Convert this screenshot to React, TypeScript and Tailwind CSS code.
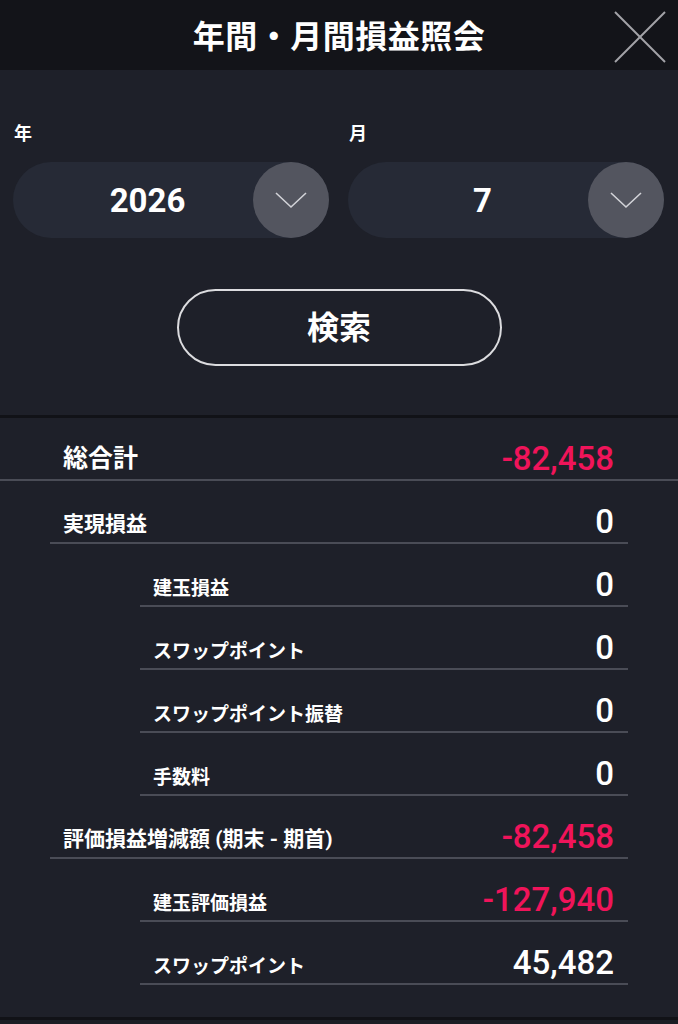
import React from 'react'

type Row = {
  label: string
  value: string
  level: 1 | 2
  negative?: boolean
}

const rows: Row[] = [
  { label: '実現損益', value: '0', level: 1 },
  { label: '建玉損益', value: '0', level: 2 },
  { label: 'スワップポイント', value: '0', level: 2 },
  { label: 'スワップポイント振替', value: '0', level: 2 },
  { label: '手数料', value: '0', level: 2 },
  { label: '評価損益増減額 (期末 - 期首)', value: '-82,458', level: 1, negative: true },
  { label: '建玉評価損益', value: '-127,940', level: 2, negative: true },
  { label: 'スワップポイント', value: '45,482', level: 2 },
]

const Chevron = () => (
  <svg width="34" height="18" viewBox="0 0 34 18" fill="none">
    <polyline points="2,2 17,16 32,2" stroke="#d2d3d8" strokeWidth="1.6" />
  </svg>
)

const Select = ({ label, value }: { label: string; value: string }) => (
  <div className="flex-1 flex flex-col">
    <span className="text-[18px] font-bold leading-[26px] pl-[1px] text-white">{label}</span>
    <div className="relative mt-[15px] h-[76px] rounded-full bg-[#262a36] flex items-center justify-center pr-[47px]">
      <span className="text-[33px] font-bold text-white leading-none">{value}</span>
      <div className="absolute right-0 top-0 w-[76px] h-[76px] rounded-full bg-[#53555f] flex items-center justify-center">
        <Chevron />
      </div>
    </div>
  </div>
)

export default function App() {
  return (
    <div
      className="w-full min-h-[1024px] bg-[#1b1d24] text-white"
      style={{ fontFamily: "Roboto, 'Noto Sans CJK JP', sans-serif" }}
    >
      {/* Header */}
      <header className="relative h-[70px] bg-[#131419] flex items-center justify-center">
        <h1 className="text-[32px] font-bold tracking-[0.5px] leading-none pt-[4px]">年間・月間損益照会</h1>
        <button className="absolute right-[10px] top-[10px] w-[56px] h-[54px] flex items-center justify-center">
          <svg width="54" height="54" viewBox="0 0 54 54">
            <line x1="2" y1="2" x2="52" y2="52" stroke="#a3a3a8" strokeWidth="2" />
            <line x1="52" y1="2" x2="2" y2="52" stroke="#a3a3a8" strokeWidth="2" />
          </svg>
        </button>
      </header>

      {/* Search form */}
      <div className="bg-[#1e2029] pt-[51px] pb-[49px] px-[13px] border-b-[3px] border-[#111217]">
        <div className="flex gap-[19px] pr-[1px]">
          <Select label="年" value="2026" />
          <Select label="月" value="7" />
        </div>
        <div className="flex justify-center mt-[51px]">
          <button className="w-[325px] h-[77px] rounded-full border-2 border-[#dcdcdf] text-[32px] font-bold text-white leading-none">
            検索
          </button>
        </div>
      </div>

      {/* Results */}
      <div className="bg-[#1e2029] pb-[32px] border-b-[3px] border-[#111217]">
        <div className="h-[63px] border-b-2 border-[#4a4c56] flex items-center justify-between pt-[20px] pl-[63px] pr-[64px]">
          <span className="text-[25px] font-bold">総合計</span>
          <span className="text-[33px] font-medium leading-none text-[#f0145a]">-82,458</span>
        </div>
        {rows.map((r, i) => (
          <div
            key={i}
            className={`h-[63px] border-b-2 border-[#4a4c56] flex items-center justify-between pt-[20px] mr-[50px] pr-[14px] ${
              r.level === 1 ? 'ml-[50px] pl-[13px]' : 'ml-[140px] pl-[13px]'
            }`}
          >
            <span className={`${r.level === 1 ? 'text-[21px]' : 'text-[19px]'} font-bold self-end mb-[2px]`}>
              {r.label}
            </span>
            <span
              className={`text-[33px] font-medium leading-none ${r.negative ? 'text-[#f0145a]' : 'text-white'}`}
            >
              {r.value}
            </span>
          </div>
        ))}
      </div>
    </div>
  )
}
